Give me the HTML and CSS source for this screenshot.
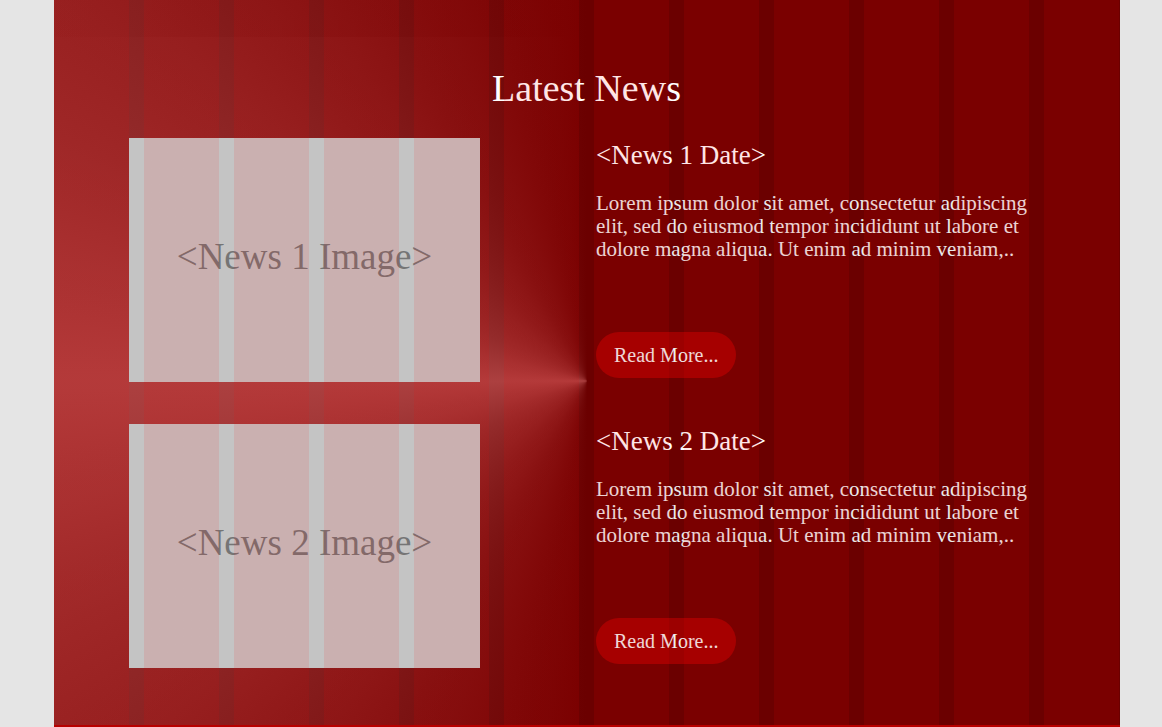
FILE: index.html
```html
<!DOCTYPE html>
<html lang="en">
<head>
<meta charset="utf-8">
<title>Latest News</title>
<link rel="stylesheet" href="styles.css">
</head>
<body>
<main class="frame">
  <div class="strip"></div>
  <section class="news">
    <h1 class="title">Latest News</h1>
    <article class="item">
      <div class="picture">&lt;News 1 Image&gt;</div>
      <div class="story">
        <h2 class="date">&lt;News 1 Date&gt;</h2>
        <p class="text">Lorem ipsum dolor sit amet, consectetur adipiscing elit, sed do eiusmod tempor incididunt ut labore et dolore magna aliqua. Ut enim ad minim veniam,..</p>
        <button class="more" type="button">Read More...</button>
      </div>
    </article>
    <article class="item">
      <div class="picture">&lt;News 2 Image&gt;</div>
      <div class="story">
        <h2 class="date">&lt;News 2 Date&gt;</h2>
        <p class="text">Lorem ipsum dolor sit amet, consectetur adipiscing elit, sed do eiusmod tempor incididunt ut labore et dolore magna aliqua. Ut enim ad minim veniam,..</p>
        <button class="more" type="button">Read More...</button>
      </div>
    </article>
  </section>
  <div class="columns"></div>
  <footer class="footer"></footer>
</main>
</body>
</html>
```
FILE: styles.css
```css
* { box-sizing: border-box; }
body {
  margin: 0;
  padding: 0 42px 0 54px;
  background: #e5e5e5;
  font-family: "Liberation Serif", serif;
}
.frame {
  position: relative;
  display: flex;
  flex-direction: column;
  min-height: 100vh;
  color: #fff;
  background: conic-gradient(from 0deg at 50% 381px,
    #6b0000 0deg, #6b0000 180deg,
    #7a1111 206deg, #8d2424 234deg, #942b2b 245deg, #ac4040 270deg,
    #942b2b 295deg, #8d2424 306deg, #7a1111 334deg, #6b0000 360deg);
}
.strip {
  height: 37px;
  background: linear-gradient(90deg, rgba(107, 0, 0, 0.04), rgba(107, 0, 0, 0.25) 50%);
}
.news {
  flex: 1;
  display: flex;
  flex-direction: column;
  gap: 42px;
  padding: 28px 76px 57px 75px;
}
.title {
  margin: 0 0 -16px;
  font-size: 38px;
  line-height: 47px;
  font-weight: 400;
  text-align: center;
}
.item {
  display: grid;
  grid-template-columns: 351fr 448fr;
  column-gap: 116px;
}
.picture {
  display: flex;
  align-items: center;
  justify-content: center;
  min-height: 244px;
  padding-bottom: 8px;
  background: #c4c4c4;
  color: #757575;
  font-size: 37px;
}
.story {
  display: flex;
  flex-direction: column;
  align-items: flex-start;
}
.date {
  margin: 0 0 19px;
  font-size: 27px;
  line-height: 35px;
  font-weight: 400;
}
.text {
  margin: 0;
  font-size: 21px;
  line-height: 23px;
  color: #eaeaea;
}
.more {
  height: 46px;
  margin: auto 0 4px;
  padding: 0 18px;
  border: 0;
  border-radius: 23px;
  background: #9c0000;
  color: #eee;
  font: 20px "Liberation Serif", serif;
}
.columns {
  position: absolute;
  inset: 0;
  pointer-events: none;
  background: repeating-linear-gradient(90deg, rgba(255, 0, 0, 0.1) 0 75px, transparent 75px 90px);
}
.footer {
  position: relative;
  height: 2px;
  background: #b80000;
}
```
